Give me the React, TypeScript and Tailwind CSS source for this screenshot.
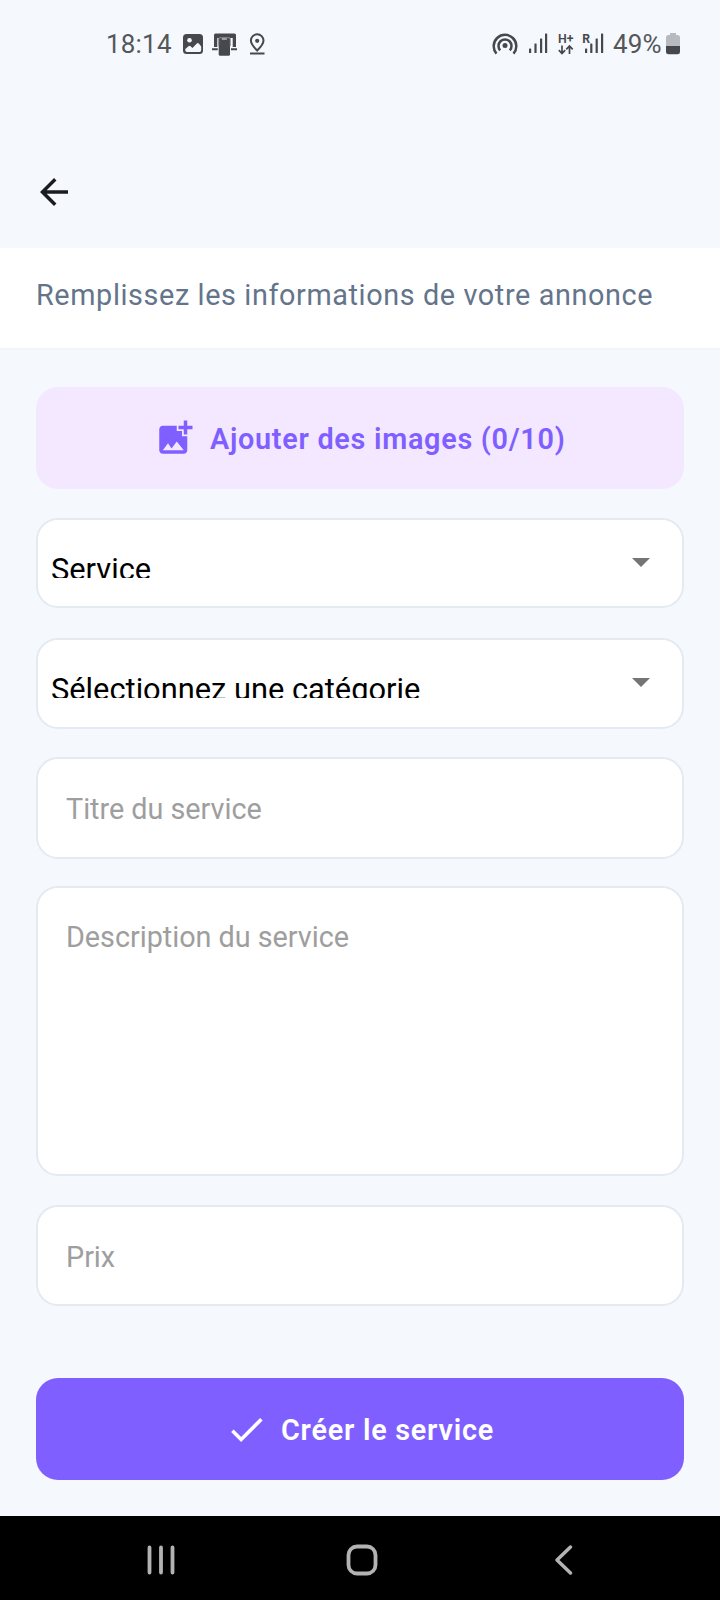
import type { ReactNode } from "react";

function StatusBar() {
  return (
    <div className="flex h-[88px] shrink-0 items-center justify-between pl-[106px] pr-[39px] text-[#47484b]">
      <div className="flex items-center">
        <span className="w-[77px] text-[26px] leading-[30px] tracking-[0.2px] text-[#55565a]">18:14</span>
        <svg width="84" height="26" viewBox="183 31 84 26" className="block">
          <rect x="183" y="34" width="20" height="20" rx="3.500" fill="currentColor" />
          <circle cx="189.500" cy="40.300" r="2.300" fill="#f5f9fe" />
          <path fill="#f5f9fe" d="M185.300 49l3.200-2.800q1-.8 2 .1l2 1.700l4.300-4.500q1-.9 2 .1l2.400 3v3.700q0 1.700-1.700 1.700h-12.500q-1.700 0-1.700-1.700Z" />
          <path fill="currentColor" d="M215.500 33.500h19q1.500 0 1.500 1.500v12h-3.300V38h-15.400v9H214V35q0-1.500 1.500-1.500ZM212 48.200h5.800v2H212ZM231 48.200h6v2h-6Z" />
          <rect x="218.700" y="37" width="11.300" height="18.700" rx="1.500" fill="currentColor" />
          <path fill="none" stroke="#8b8d91" strokeWidth="1" d="M218.700 46v-7q0-1.300 1.300-1.300h9q1.300 0 1.300 1.300v7" />
          <path stroke="#b9bbbf" strokeWidth="1.500" d="M221.800 39h5" />
          <path fill="none" stroke="currentColor" strokeWidth="2" d="M257.200 50.500c-4.400-4.200-6.300-6.800-6.300-9.900a6.300 6.300 0 0 1 12.600 0c0 3.100-1.900 5.700-6.300 9.900Z" />
          <circle cx="257.200" cy="40.800" r="2.100" fill="currentColor" />
          <path stroke="currentColor" strokeWidth="2" d="M250 53.500h14.500" />
        </svg>
      </div>
      <div className="flex items-center">
        <svg width="120" height="26" viewBox="492 31 120 26" className="block">
          <g fill="none" stroke="currentColor" strokeWidth="2.500">
            <path d="M496.500 53.600a11.300 11.300 0 1 1 17 0" />
            <path d="M500.200 50.300a6.500 6.500 0 1 1 9.600 0" />
          </g>
          <circle cx="505" cy="45.600" r="2.500" fill="currentColor" />
          <g fill="currentColor">
            <rect x="529" y="48.500" width="2.200" height="4.500" rx=".5" />
            <rect x="534.400" y="43.500" width="2.200" height="9.500" rx=".5" />
            <rect x="540" y="38.500" width="2.200" height="14.500" rx=".5" />
            <rect x="545" y="33.500" width="2.200" height="19.500" rx=".5" />
            <rect x="585" y="48.500" width="2.200" height="4.500" rx=".5" />
            <rect x="590.200" y="43.500" width="2.200" height="9.500" rx=".5" />
            <rect x="595.600" y="38.500" width="2.200" height="14.500" rx=".5" />
            <rect x="601" y="33.500" width="2.200" height="19.500" rx=".5" />
          </g>
          <text x="558" y="43.200" fill="currentColor" fontSize="12.500" fontWeight="600" fontFamily="Roboto" textLength="15.500" lengthAdjust="spacingAndGlyphs">H+</text>
          <text x="582.300" y="42.500" fill="currentColor" fontSize="13" fontWeight="700" fontFamily="Roboto" textLength="7.800" lengthAdjust="spacingAndGlyphs">R</text>
          <path fill="none" stroke="currentColor" strokeWidth="1.700" d="M562 45.500v8M558.800 50.200l3.200 3.300l3.200-3.300M569.500 54v-8M566.300 49.300l3.200-3.300l3.200 3.300" />
        </svg>
        <span className="w-[53px] pl-[1px] text-[26px] leading-[30px] tracking-[0.1px] text-[#55565a]">49%</span>
        <svg width="16" height="26" viewBox="665 31 16 26" className="block">
          <path fill="#b7babe" d="M670 33h6v2h1.500q2.500 0 2.500 2.500V47h-14V37.500q0-2.500 2.500-2.500h1.500Z" />
          <path fill="currentColor" d="M666 46h14v6q0 2.300-2.500 2.300h-9q-2.500 0-2.500-2.300Z" />
        </svg>
      </div>
    </div>
  );
}

function SelectField({ label, className }: { label: string; className: string }) {
  return (
    <div className={`flex shrink-0 justify-between rounded-[22px] border-2 border-[#e4eaf1] bg-white pl-[13px] pr-[32px] ${className}`}>
      <div className="mt-[30px] h-[28px] overflow-hidden pt-[3px] text-[30.8px] leading-[34px] text-black">{label}</div>
      <svg width="18" height="9" viewBox="0 0 18 9" className="mt-[38px] block">
        <path d="M0 0h18L9 9Z" fill="#757575" />
      </svg>
    </div>
  );
}

function InputField({ children, className }: { children: ReactNode; className: string }) {
  return (
    <div className={`shrink-0 rounded-[22px] border-2 border-[#e4eaf1] bg-white px-[28px] text-[28.8px] leading-[34px] tracking-[-0.03px] text-[#9e9e9e] ${className}`}>
      {children}
    </div>
  );
}

export default function App() {
  return (
    <div className="flex h-[1600px] w-[720px] flex-col overflow-hidden bg-[#f5f9fe] font-['Roboto',sans-serif]">
      <StatusBar />
      <header className="flex h-[160px] shrink-0 items-start pl-[33px] pt-[83px]">
        <svg width="42" height="42" viewBox="0 0 24 24" className="block" fill="#1c1b1f">
          <path d="M20 11H7.830l5.590-5.590L12 4l-8 8 8 8 1.410-1.410L7.830 13H20v-2z" />
        </svg>
      </header>
      <div className="h-[102px] shrink-0 border-b-2 border-[#f1f5f9] bg-white pl-[36px] pt-[30px] text-[28.8px] leading-[34px] tracking-[0.61px] text-[#64748b]">
        Remplissez les informations de votre annonce
      </div>
      <main className="flex h-[1166px] shrink-0 flex-col px-[36px] pt-[37px]">
        <button className="flex h-[102px] shrink-0 items-center rounded-[22px] bg-[#f3e8ff] pl-[118px] text-[28.8px] font-semibold tracking-[0.72px] text-[#7f5fff]">
          <svg width="42" height="42" viewBox="0 0 24 24" className="mr-[14px] block" fill="currentColor">
            <path d="M19 7v2.990s-1.990.01-2 0V7h-3s.01-1.990 0-2h3V2h2v3h3v2h-3zm-3 4V8h-3V5H5c-1.100 0-2 .9-2 2v12c0 1.100.9 2 2 2h12c1.100 0 2-.9 2-2v-8h-3zM5 19l3-4 2 3 3-4 4 5H5z" />
          </svg>
          <span className="pt-[3px]">Ajouter des images (0/10)</span>
        </button>
        <SelectField label="Service" className="mt-[29px] h-[90px]" />
        <SelectField label="Sélectionnez une catégorie" className="mt-[30px] h-[91px]" />
        <InputField className="mt-[28px] h-[102px] pt-[33px]">Titre du service</InputField>
        <InputField className="mt-[27px] h-[290px] pt-[32px]">Description du service</InputField>
        <InputField className="mt-[29px] h-[101px] pt-[33px]">Prix</InputField>
        <button className="mt-[72px] flex h-[102px] shrink-0 items-center rounded-[22px] bg-[#7f5fff] pl-[189px] text-[28.8px] font-semibold tracking-[0.75px] text-white">
          <svg width="43" height="43" viewBox="0 0 24 24" className="mr-[13px] block" fill="currentColor">
            <path d="M9 16.170 4.830 12l-1.420 1.410L9 19 21 7l-1.410-1.410z" />
          </svg>
          <span className="pt-[3px]">Créer le service</span>
        </button>
      </main>
      <nav className="flex h-[84px] shrink-0 items-center bg-black pl-[146px] pt-[4px]">
        <svg width="30" height="34" viewBox="0 0 30 34" fill="none" stroke="#b3b3b3" strokeWidth="3.800" strokeLinecap="round">
          <path d="M3.500 4.500v25M15 4.500v25M26.500 4.500v25" />
        </svg>
        <svg width="34" height="34" viewBox="0 0 34 34" className="ml-[169px]" fill="none" stroke="#b3b3b3" strokeWidth="3.800">
          <rect x="3.500" y="3.500" width="27" height="27" rx="8.500" />
        </svg>
        <svg width="20" height="34" viewBox="0 0 20 34" className="ml-[175px]" fill="none" stroke="#b3b3b3" strokeWidth="3.500" strokeLinecap="round" strokeLinejoin="round">
          <path d="M16.500 4L3 17l13.500 13" />
        </svg>
      </nav>
    </div>
  );
}
